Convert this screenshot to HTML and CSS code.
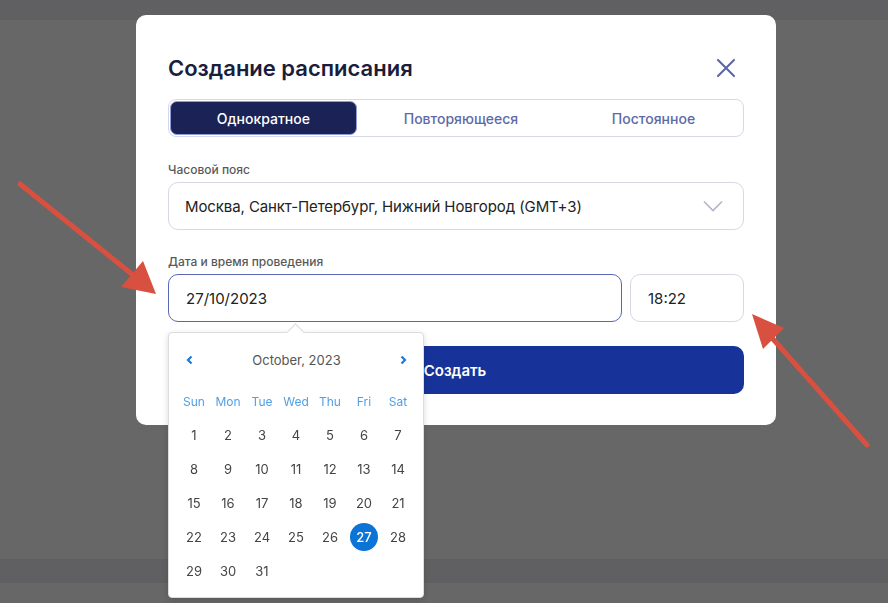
FILE: index.html
```html
<!DOCTYPE html>
<html lang="ru">
<head>
  <meta charset="UTF-8">
  <title>Создание расписания</title>
  <link rel="stylesheet" href="styles.css">
</head>
<body>

<!-- фон страницы под модалкой -->
<div class="page">
  <div class="page-top"></div>
  <div class="page-body"></div>
  <div class="page-strip"></div>
</div>

<div class="overlay">
  <div class="modal">
    <div class="modal-header">
      <h2>Создание расписания</h2>
      <button class="close-btn" aria-label="Закрыть">
        <svg width="18" height="18" viewBox="0 0 18 18"><path d="M1 1L17 17M17 1L1 17" stroke="#5865a8" stroke-width="2" stroke-linecap="round"/></svg>
      </button>
    </div>

    <div class="tabs">
      <button class="tab active">Однократное</button>
      <button class="tab">Повторяющееся</button>
      <button class="tab">Постоянное</button>
    </div>

    <div class="field first">
      <label class="field-label">Часовой пояс</label>
      <div class="select">
        <span>Москва, Санкт-Петербург, Нижний Новгород (GMT+3)</span>
        <svg width="20" height="12" viewBox="0 0 20 12"><path d="M1 1.5L10 10.5L19 1.5" fill="none" stroke="#b2b5c9" stroke-width="1.6"/></svg>
      </div>
    </div>

    <div class="field">
      <label class="field-label">Дата и время проведения</label>
      <div class="date-row">
        <div class="date-wrap">
          <div class="input focused">27/10/2023</div>

          <!-- выпадающий календарь -->
          <div class="datepicker">
            <div class="dp-header">
              <span class="dp-nav">
                <svg width="7" height="10" viewBox="0 0 7 10"><path d="M5.5 1.5L2 5L5.5 8.5" fill="none" stroke="#1a7ad8" stroke-width="2.2"/></svg>
              </span>
              <span class="dp-month">October, 2023</span>
              <span class="dp-nav">
                <svg width="7" height="10" viewBox="0 0 7 10"><path d="M1.5 1.5L5 5L1.5 8.5" fill="none" stroke="#1a7ad8" stroke-width="2.2"/></svg>
              </span>
            </div>
            <div class="dp-grid" id="dpGrid">
              <span class="dp-wd">Sun</span><span class="dp-wd">Mon</span><span class="dp-wd">Tue</span><span class="dp-wd">Wed</span><span class="dp-wd">Thu</span><span class="dp-wd">Fri</span><span class="dp-wd">Sat</span>
              <span class="dp-day">1</span><span class="dp-day">2</span><span class="dp-day">3</span><span class="dp-day">4</span><span class="dp-day">5</span><span class="dp-day">6</span><span class="dp-day">7</span>
              <span class="dp-day">8</span><span class="dp-day">9</span><span class="dp-day">10</span><span class="dp-day">11</span><span class="dp-day">12</span><span class="dp-day">13</span><span class="dp-day">14</span>
              <span class="dp-day">15</span><span class="dp-day">16</span><span class="dp-day">17</span><span class="dp-day">18</span><span class="dp-day">19</span><span class="dp-day">20</span><span class="dp-day">21</span>
              <span class="dp-day">22</span><span class="dp-day">23</span><span class="dp-day">24</span><span class="dp-day">25</span><span class="dp-day">26</span><span class="dp-day"><b class="selected">27</b></span><span class="dp-day">28</span>
              <span class="dp-day">29</span><span class="dp-day">30</span><span class="dp-day">31</span>
            </div>
          </div>
        </div>
        <div class="input time">18:22</div>
      </div>
    </div>

    <button class="submit-btn">Создать</button>
  </div>
</div>

<!-- стрелки-пометки поверх скриншота -->
<svg class="marks" width="888" height="603" viewBox="0 0 888 603">
  <line x1="20" y1="184" x2="133" y2="275" stroke="#d8503f" stroke-width="5" stroke-linecap="round"/>
  <polygon points="156,294 121,287 143,261" fill="#d8503f"/>
  <line x1="867" y1="445" x2="773" y2="339" stroke="#d8503f" stroke-width="5" stroke-linecap="round"/>
  <polygon points="752,314 763,349 784,328" fill="#d8503f"/>
</svg>

</body>
</html>
```

FILE: styles.css
```css
body {
  margin: 0;
  background: #676767;
  font-family: 'Inter', 'Noto Sans', sans-serif;
  overflow: hidden;
}

.page {
  height: 603px;
  display: flex;
  flex-direction: column;
}
.page-top {
  height: 20px;
  background: #606062;
}
.page-body {
  height: 539px;
}
.page-strip {
  height: 24px;
  background: #606062;
}

/* модалка */
.overlay {
  position: fixed;
  inset: 0;
  padding: 15px 0 0 136px;
}
.modal {
  width: 640px;
  box-sizing: border-box;
  background: #fff;
  border-radius: 10px;
  padding: 39px 32px 31px;
}
.modal-header {
  display: flex;
  justify-content: space-between;
  align-items: center;
  height: 28px;
}
.modal-header h2 {
  margin: 0;
  font-size: 22px;
  font-weight: 600;
  color: #1a1e3c;
}
.close-btn {
  border: none;
  background: none;
  padding: 0;
  margin-right: 9px;
  display: flex;
}

.tabs {
  margin-top: 17px;
  height: 38px;
  box-sizing: border-box;
  border: 1px solid #d6d8ea;
  border-radius: 8px;
  padding: 1px;
  display: flex;
}
.tab {
  flex: 1 1 auto;
  border: 1px solid transparent;
  background: none;
  border-radius: 7px;
  font-family: inherit;
  font-size: 14px;
  font-weight: 500;
  color: #5d6aa6;
  padding: 0;
}
.tab.active {
  background: #1b2255;
  border-color: #8f9cd8;
  color: #fff;
}

.field {
  margin-top: 25px;
}
.field.first {
  margin-top: 26px;
}
.field-label {
  display: block;
  font-size: 12px;
  line-height: 14px;
  font-weight: 500;
  color: #595959;
  margin-bottom: 5px;
}

.select {
  height: 48px;
  box-sizing: border-box;
  border: 1px solid #d6d8e6;
  border-radius: 10px;
  padding: 0 20px 0 16px;
  display: flex;
  align-items: center;
  justify-content: space-between;
  font-size: 15px;
  letter-spacing: -0.1px;
  color: #222;
}

.date-row {
  display: flex;
  gap: 8px;
}
.date-wrap {
  flex: 1;
  position: relative;
}
.input {
  height: 48px;
  box-sizing: border-box;
  border: 1px solid #d6d8e6;
  border-radius: 10px;
  padding: 0 17px;
  display: flex;
  align-items: center;
  font-size: 15px;
  color: #222;
}
.input.focused {
  border: 1.5px solid #5767b4;
}
.input.time {
  width: 114px;
}

.submit-btn {
  display: block;
  width: 100%;
  margin-top: 24px;
  height: 48px;
  border: none;
  border-radius: 10px;
  background: #173399;
  color: #fff;
  font-family: inherit;
  font-size: 15px;
  font-weight: 600;
  padding-left: 4px;
}

/* календарь */
.datepicker {
  position: absolute;
  top: 58px;
  left: 0;
  width: 256px;
  box-sizing: border-box;
  background: #fff;
  border: 1px solid #dcdcdc;
  border-radius: 4px;
  box-shadow: 0 2px 6px rgba(0, 0, 0, 0.15);
  padding: 10px 8px 9px;
  z-index: 5;
}
.datepicker::before {
  content: '';
  position: absolute;
  top: -7px;
  left: 120px;
  width: 12px;
  height: 12px;
  background: #fff;
  border-top: 1px solid #dcdcdc;
  border-left: 1px solid #dcdcdc;
  transform: rotate(45deg);
}
.dp-header {
  height: 34px;
  margin-bottom: 7px;
  display: flex;
  align-items: center;
  justify-content: space-between;
  padding: 0 8px 0 9px;
}
.dp-nav {
  display: flex;
}
.dp-month {
  font-size: 13px;
  color: #555;
}
.dp-grid {
  display: grid;
  grid-template-columns: repeat(7, 34px);
  grid-auto-rows: 34px;
  text-align: center;
}
.dp-grid span {
  display: flex;
  align-items: center;
  justify-content: center;
}
.dp-wd {
  font-size: 12px;
  color: #4f9fe6;
}
.dp-day {
  font-size: 13px;
  color: #444;
}
.selected {
  width: 28px;
  height: 28px;
  border-radius: 50%;
  background: #0b74d6;
  color: #fff;
  font-weight: 500;
  display: flex;
  align-items: center;
  justify-content: center;
}

.marks {
  position: fixed;
  left: 0;
  top: 0;
  pointer-events: none;
  z-index: 10;
}
```
